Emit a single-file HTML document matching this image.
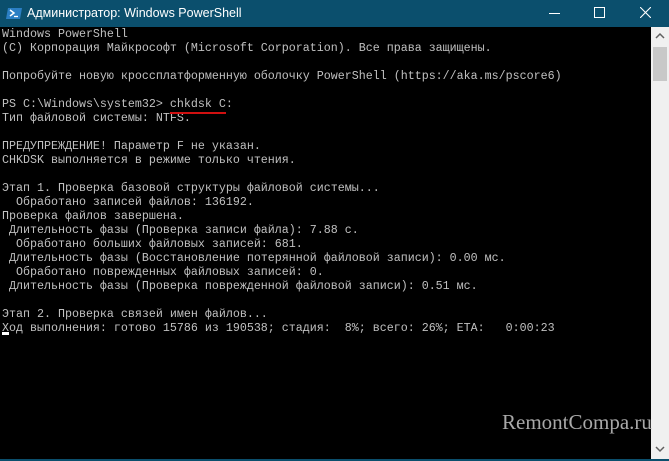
<!DOCTYPE html>
<html><head><meta charset="utf-8"><style>
html,body{margin:0;padding:0;width:669px;height:461px;overflow:hidden;background:#000}
.title{position:absolute;left:0;top:0;width:669px;height:27px;background:#0b4f6d;color:#fff;font-family:"Liberation Sans",sans-serif;font-size:12.5px}
.title .t{position:absolute;left:27px;top:6px}
.con{position:absolute;left:2px;top:27px;font-family:"Liberation Mono",monospace;font-size:11.67px;line-height:14px;color:#c0c0c0;white-space:pre}
.sb{position:absolute;left:651px;top:27px;width:18px;height:432px;background:#f0f0f0}
.bot{position:absolute;left:0;top:459px;width:669px;height:2px;background:#0b4f6d}
.wm{position:absolute;left:502px;top:410px;font-family:"Liberation Serif",serif;font-size:21px;color:#a8a8a8}
</style></head><body>
<div class="title">
<svg style="position:absolute;left:6px;top:7px" width="16" height="13"><polygon points="2,1 16,1 14,12 0,12" fill="#2b7fc4"/><path d="M4 3 L8 6 L4 9" stroke="#fff" stroke-width="1.5" fill="none"/><line x1="8" y1="9.5" x2="12" y2="9.5" stroke="#fff" stroke-width="1.3"/></svg>
<span class="t">Администратор: Windows PowerShell</span>
<div style="position:absolute;left:549px;top:13px;width:11px;height:1px;background:#fff"></div>
<div style="position:absolute;left:594px;top:7px;width:9px;height:9px;border:1px solid #fff"></div>
<svg style="position:absolute;left:640px;top:7px" width="11" height="11"><path d="M0 0L11 11M11 0L0 11" stroke="#fff" stroke-width="1.1"/></svg>
</div>
<div class="con">Windows PowerShell
(C) Корпорация Майкрософт (Microsoft Corporation). Все права защищены.

Попробуйте новую кроссплатформенную оболочку PowerShell (https://aka.ms/pscore6)

PS C:\Windows\system32> chkdsk C:
Тип файловой системы: NTFS.

ПРЕДУПРЕЖДЕНИЕ! Параметр F не указан.
CHKDSK выполняется в режиме только чтения.

Этап 1. Проверка базовой структуры файловой системы...
  Обработано записей файлов: 136192.
Проверка файлов завершена.
 Длительность фазы (Проверка записи файла): 7.88 с.
  Обработано больших файловых записей: 681.
 Длительность фазы (Восстановление потерянной файловой записи): 0.00 мс.
  Обработано поврежденных файловых записей: 0.
 Длительность фазы (Проверка поврежденной файловой записи): 0.51 мс.

Этап 2. Проверка связей имен файлов...
Ход выполнения: готово 15786 из 190538; стадия:  8%; всего: 26%; ETA:   0:00:23</div>
<div style="position:absolute;left:170px;top:112px;width:56px;height:2px;background:#d01010"></div>
<div style="position:absolute;left:2px;top:332px;width:7px;height:3px;background:#fff"></div>
<div class="sb">
<svg style="position:absolute;left:4px;top:5px" width="10" height="7"><path d="M1 6L5 2L9 6" stroke="#606060" stroke-width="1.5" fill="none"/></svg>
<div style="position:absolute;left:2px;top:20px;width:14px;height:34px;background:#c8c8c8"></div>
<svg style="position:absolute;left:4px;top:419px" width="10" height="7"><path d="M1 1L5 5L9 1" stroke="#606060" stroke-width="1.5" fill="none"/></svg>
</div>
<div class="bot"></div>
<div class="wm">RemontCompa.ru</div>
</body></html>
